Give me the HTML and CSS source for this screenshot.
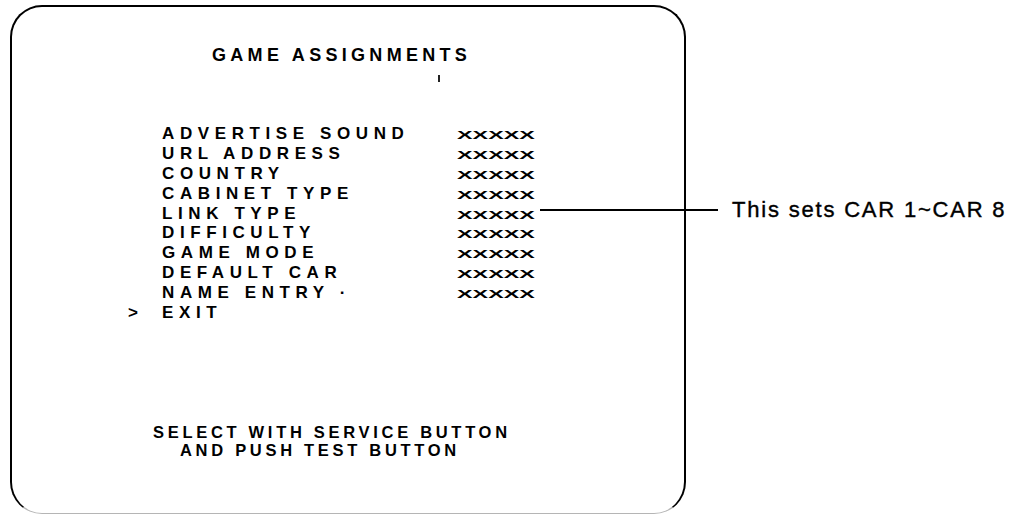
FILE: index.html
```html
<!DOCTYPE html>
<html lang="en">
<head>
  <meta charset="UTF-8" />
  <title>Game Assignments</title>
  <link rel="stylesheet" href="styles.css">
</head>
<body>

  <!-- Test-mode screen -->
  <section class="screen">
    <h1 class="title">GAME ASSIGNMENTS</h1>
    <div class="mark-row"><span class="tick"></span></div>

    <ul class="menu">
      <li class="item"><span class="cursor"></span><span class="label">ADVERTISE SOUND</span><span class="value"><span>XXXXX</span></span></li>
      <li class="item"><span class="cursor"></span><span class="label">URL ADDRESS</span><span class="value"><span>XXXXX</span></span></li>
      <li class="item"><span class="cursor"></span><span class="label">COUNTRY</span><span class="value"><span>XXXXX</span></span></li>
      <li class="item"><span class="cursor"></span><span class="label">CABINET TYPE</span><span class="value"><span>XXXXX</span></span></li>
      <li class="item">
        <span class="cursor"></span><span class="label">LINK TYPE</span><span class="value"><span>XXXXX</span></span>
        <!-- Callout to the right of the screen -->
        <span class="callout"><span class="leader"></span><span class="note">This sets CAR 1~CAR 8</span></span>
      </li>
      <li class="item"><span class="cursor"></span><span class="label">DIFFICULTY</span><span class="value"><span>XXXXX</span></span></li>
      <li class="item"><span class="cursor"></span><span class="label">GAME MODE</span><span class="value"><span>XXXXX</span></span></li>
      <li class="item"><span class="cursor"></span><span class="label">DEFAULT CAR</span><span class="value"><span>XXXXX</span></span></li>
      <li class="item"><span class="cursor"></span><span class="label">NAME ENTRY &middot;</span><span class="value"><span>XXXXX</span></span></li>
      <li class="item"><span class="cursor">&gt;</span><span class="label">EXIT</span></li>
    </ul>

    <div class="help">
      <div class="help-line first">SELECT WITH SERVICE BUTTON</div>
      <div class="help-line second">AND PUSH TEST BUTTON</div>
    </div>
  </section>

</body>
</html>
```

FILE: styles.css
```css
body {
  margin: 0;
  padding: 5px 0 0 10px;
  background-color: #ffffff;
  color: #000000;
  font-family: "Liberation Sans", Arial, sans-serif;
  overflow: hidden;
}
.screen {
  box-sizing: border-box;
  width: 676px;
  height: 509px;
  padding-top: 38px;
  border: 2px solid #000000;
  border-bottom: 1px solid #b5b5b5;
  border-radius: 32px;
  font-weight: bold;
}
.title {
  margin: 0 0 0 200px;
  font-size: 18px;
  line-height: 20px;
  letter-spacing: 4.3px;
  font-weight: bold;
}
.mark-row {
  height: 7px;
  margin-top: 10px;
}
.tick {
  display: block;
  width: 2px;
  height: 7px;
  margin-left: 426px;
  background-color: #222222;
}
.menu {
  list-style: none;
  margin: 42px 0 0 0;
  padding: 0 0 0 116px;
}
.item {
  display: flex;
  align-items: flex-start;
  height: 19.9px;
  font-size: 17px;
  line-height: 19.9px;
  letter-spacing: 5.6px;
  white-space: nowrap;
}
.cursor {
  width: 34px;
  flex: none;
  letter-spacing: 0;
}
.label {
  width: 295px;
  flex: none;
}
.value {
  width: 80px;
  flex: none;
  letter-spacing: 0;
}
.value span {
  display: inline-block;
  font-size: 11.5px;
  transform: scaleX(2.03);
  transform-origin: left center;
}
.callout {
  display: flex;
  align-items: center;
  height: 20px;
  margin-top: -4px;
  margin-left: 3px;
  letter-spacing: 0;
}
.leader {
  width: 178px;
  height: 2px;
  background-color: #000000;
}
.note {
  margin-left: 14px;
  font-size: 22px;
  line-height: 20px;
  font-weight: normal;
  letter-spacing: 1.8px;
  -webkit-text-stroke: 0.4px #000000;
}
.help {
  margin-top: 100px;
  font-size: 16.5px;
  line-height: 18px;
  letter-spacing: 3.7px;
}
.help-line.first {
  padding-left: 141px;
}
.help-line.second {
  padding-left: 168px;
}
```
